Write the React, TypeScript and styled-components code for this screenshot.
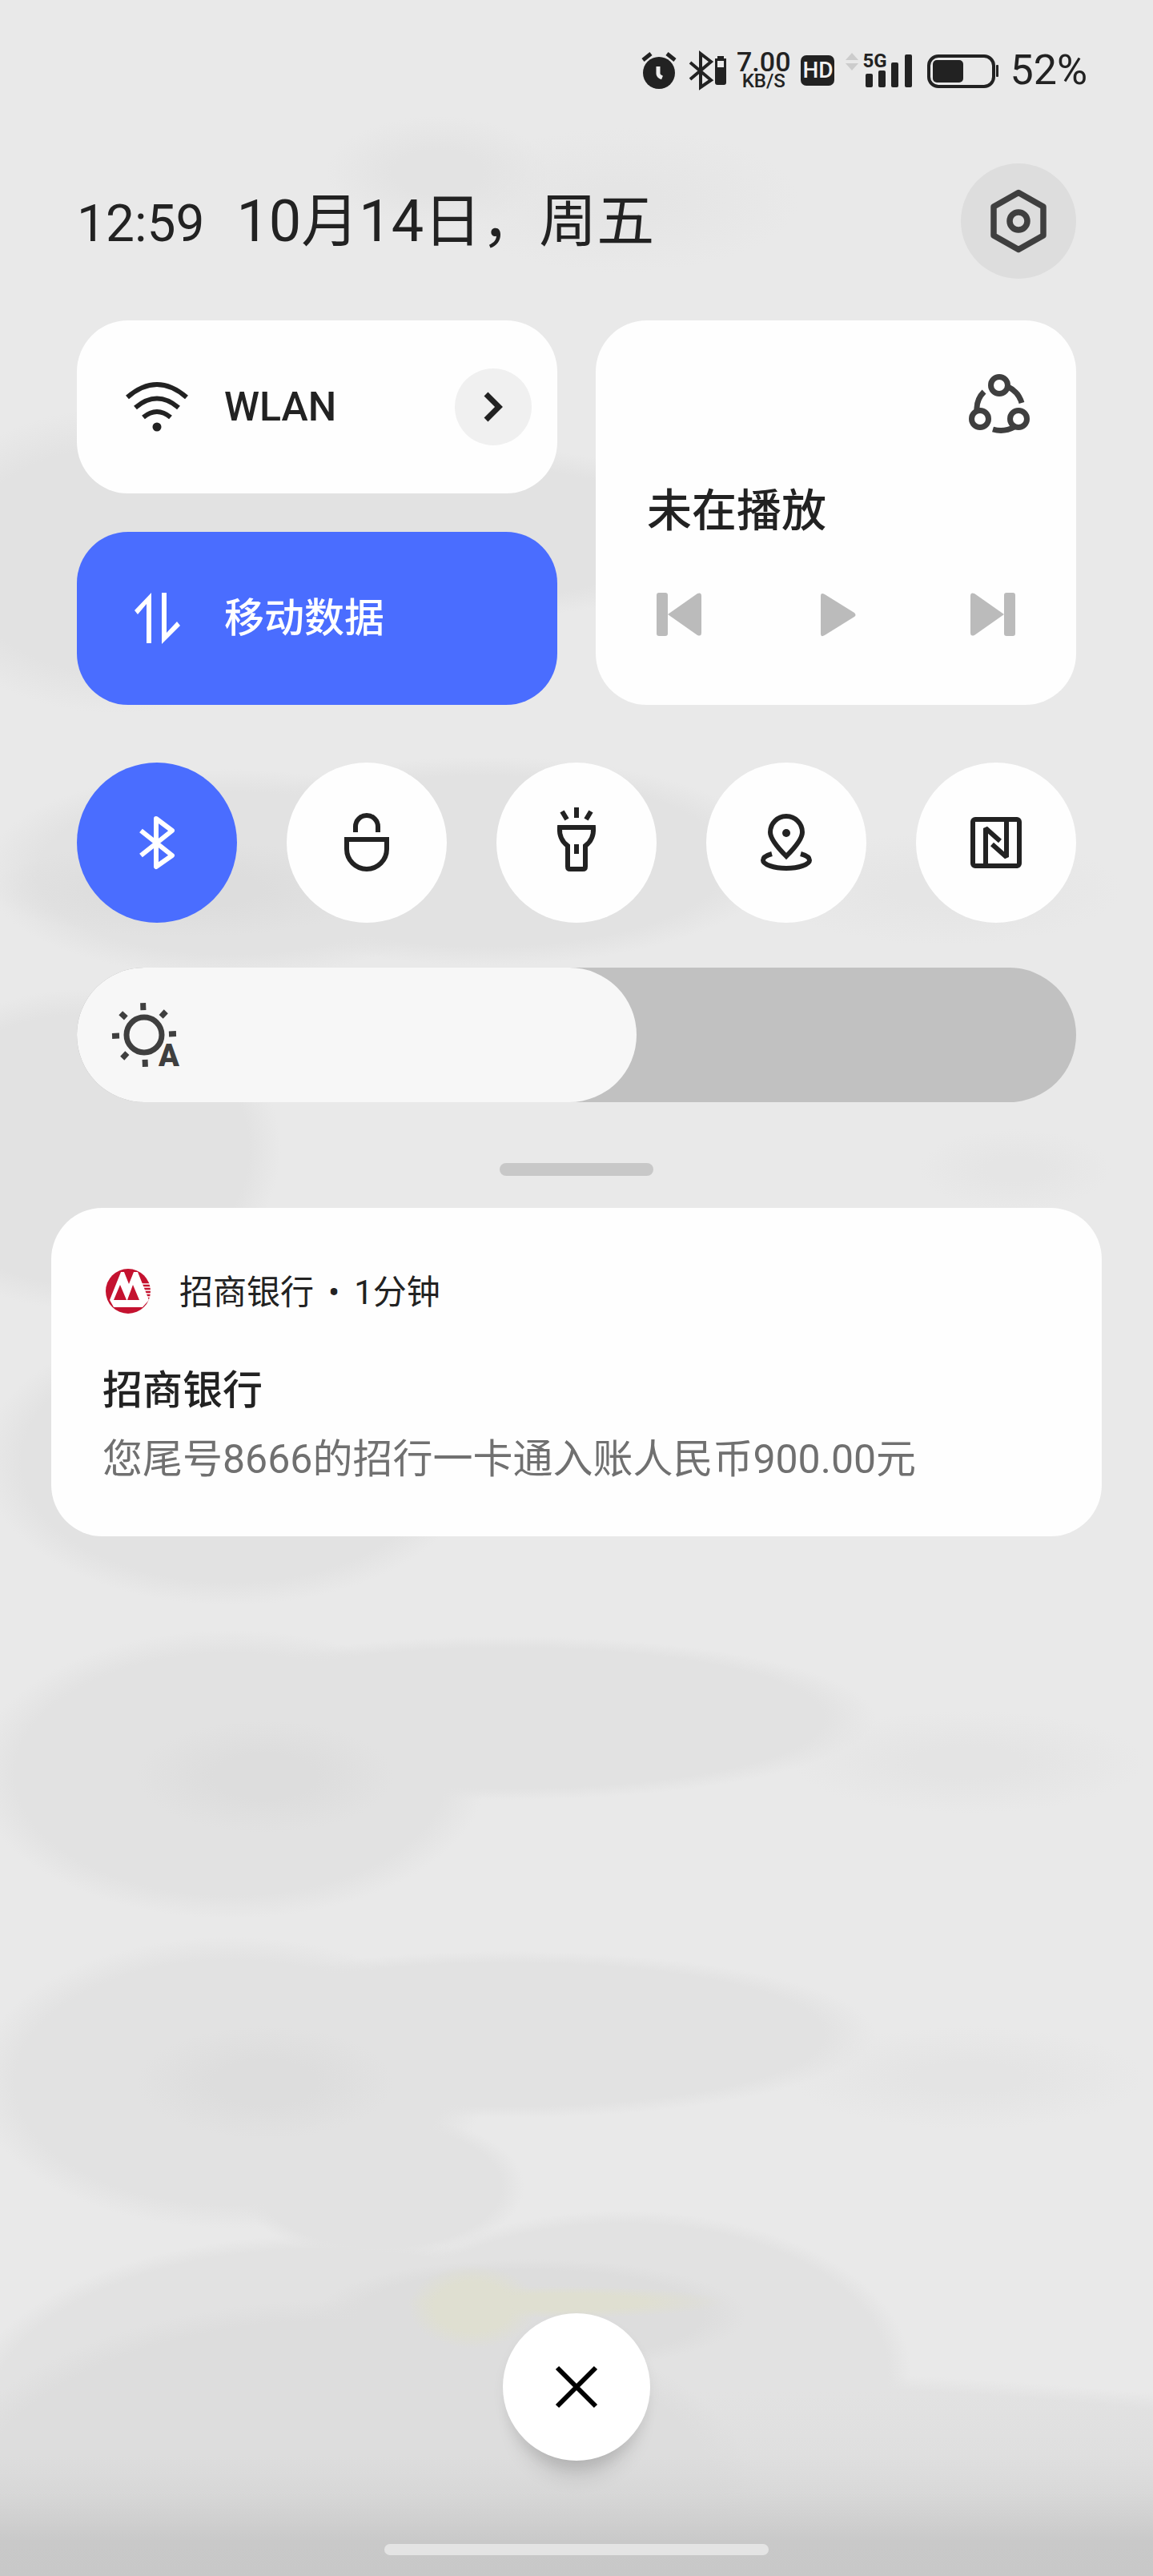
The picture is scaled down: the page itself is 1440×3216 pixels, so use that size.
import React, { useState } from "react";
import styled, { createGlobalStyle } from "styled-components";

const ink = "#222222";
const soft = "#3f3f3f";
const blue = "#4a6dff";

/* Wallpaper blobs: [x %, y px, x radius, y radius, colour, solid part %] */
type Blob = [number, number, number, number, string, number];

const blobs: Blob[] = [
  [16, 1110, 240, 60, "#dddddd", 40],
  [23, 2218, 160, 70, "#dddddd", 40],
  [23, 2600, 160, 70, "#dddddd", 40],
  [38, 215, 140, 70, "#e3e3e3", 40],
  [54, 250, 220, 90, "#e5e5e5", 20],
  [10, 700, 260, 190, "#e2e2e2", 74],
  [38, 665, 380, 110, "#e2e2e2", 78],
  [20, 1090, 310, 130, "#e2e2e2", 78],
  [42, 1075, 370, 130, "#e2e2e2", 82],
  [82, 1110, 220, 70, "#e5e5e5", 30],
  [7, 1435, 250, 200, "#e2e2e2", 84],
  [88, 1460, 120, 50, "#e5e5e5", 30],
  [20, 1824, 310, 180, "#e2e2e2", 84],
  [20, 2215, 320, 180, "#e2e2e2", 84],
  [44, 2145, 460, 102, "#e2e2e2", 86],
  [84, 2200, 220, 64, "#e4e4e4", 30],
  [20, 2600, 320, 182, "#e2e2e2", 84],
  [44, 2540, 460, 104, "#e2e2e2", 86],
  [84, 2594, 220, 64, "#e4e4e4", 30],
];

const floorBlobs: Blob[] = [
  [41, 2880, 80, 52, "#dfdfd1", 60],
  [49, 2874, 200, 20, "#dfdfd1", 50],
  [46, 2890, 270, 70, "#dddddd", 80],
  [30, 3130, 520, 260, "#dddddd", 90],
  [54, 2960, 360, 200, "#e2e2e2", 92],
  [33, 2730, 180, 90, "#e2e2e2", 84],
  [28, 3010, 450, 220, "#e2e2e2", 92],
  [60, 3190, 1200, 230, "#e2e2e2", 92],
];

const paint = ([x, y, rx, ry, color, solid]: Blob) =>
  `radial-gradient(${rx}px ${ry}px at ${x}% ${y}px, ${color} ${solid}%, transparent 100%)`;

const wallpaper = [
  "linear-gradient(to top, #c8c8c8 0, #c9c9c9 44px, rgba(207, 207, 207, 0.95) 70px, rgba(214, 214, 214, 0.8) 104px, rgba(221, 221, 221, 0.6) 150px, rgba(226, 226, 226, 0) 230px)",
  ...floorBlobs.map(paint),
  ...blobs.map(paint),
].join(",");

const GlobalStyle = createGlobalStyle`
  *, *::before, *::after { box-sizing: border-box; }
  body {
    margin: 0;
    background: #e9e9e9;
    color: ${ink};
    font-family: Roboto, "Noto Sans CJK SC", sans-serif;
  }
  button {
    border: 0;
    padding: 0;
    background: none;
    color: inherit;
    font: inherit;
    cursor: pointer;
  }
  svg { display: block; flex: none; overflow: visible; }
  h1, h2, p { margin: 0; font-weight: 400; }
`;

const Page = styled.div`
  min-height: 100vh;
  display: flex;
  flex-direction: column;
  background: ${wallpaper}, #e9e9e9;
`;

const StatusBar = styled.header`
  display: flex;
  justify-content: flex-end;
  align-items: center;
  gap: 13px;
  height: 48px;
  margin-top: 64px;
  padding-right: 82px;
`;

const Speed = styled.div`
  display: flex;
  flex-direction: column;
  align-items: center;
  font-weight: 500;
`;

const SpeedValue = styled.span`
  font-size: 34px;
  line-height: 26px;
`;

const SpeedUnit = styled.span`
  font-size: 24px;
  line-height: 22px;
`;

const HdBadge = styled.span`
  width: 42px;
  height: 38px;
  border-radius: 7px;
  background: ${ink};
  color: #f2f2f2;
  font-size: 28px;
  font-weight: 500;
  line-height: 38px;
  text-align: center;
`;

const Signal = styled.div`
  display: flex;
  width: 90px;
  height: 48px;
  position: relative;
`;

const SignalLabel = styled.span`
  position: absolute;
  left: 22px;
  top: 0;
  font-size: 24px;
  font-weight: 700;
  line-height: 24px;
`;

const Percent = styled.span`
  font-size: 52px;
  line-height: 52px;
`;

const Content = styled.main`
  display: flex;
  flex-direction: column;
  padding: 92px 96px 0;
`;

const Heading = styled.div`
  display: flex;
  justify-content: space-between;
  align-items: center;
`;

const Clock = styled.div`
  display: flex;
  align-items: baseline;
  gap: 40px;
  padding-top: 4px;
  line-height: 80px;
`;

const Time = styled.time`
  font-size: 64px;
`;

const DateText = styled.h1`
  font-size: 72px;
`;

const RoundButton = styled.button<{ $size: number; $bg: string; $fg?: string }>`
  display: flex;
  flex: none;
  justify-content: center;
  align-items: center;
  width: ${(p) => p.$size}px;
  height: ${(p) => p.$size}px;
  border-radius: 50%;
  background: ${(p) => p.$bg};
  color: ${(p) => p.$fg ?? ink};
`;

const Tiles = styled.section`
  display: grid;
  grid-template-columns: 1fr 1fr;
  gap: 48px;
  margin-top: 52px;
`;

const TileColumn = styled.div`
  display: flex;
  flex-direction: column;
  gap: 48px;
`;

const Tile = styled.div<{ $on?: boolean }>`
  display: flex;
  align-items: center;
  height: 216px;
  padding-right: 32px;
  border-radius: 64px;
  background: ${(p) => (p.$on ? blue : "#fefefe")};
  color: ${(p) => (p.$on ? "#ffffff" : ink)};
`;

const TileToggle = styled.button`
  display: flex;
  flex: 1;
  align-items: center;
  gap: 44px;
  height: 100%;
  padding-left: 60px;
  font-size: 50px;
  font-weight: 500;
  line-height: 64px;
`;

const MediaCard = styled.section`
  display: flex;
  flex-direction: column;
  padding: 66px 56px 85px 64px;
  border-radius: 64px;
  background: #fefefe;
`;

const CastButton = styled.button`
  align-self: flex-end;
  color: ${soft};
`;

const MediaTitle = styled.h2`
  margin-top: 64px;
  font-size: 56px;
  font-weight: 500;
  line-height: 64px;
`;

const Controls = styled.div`
  display: flex;
  justify-content: space-between;
  margin: 69px 20px 0 12px;
  color: #bbbbbb;
`;

const Toggles = styled.section`
  display: flex;
  justify-content: space-between;
  margin-top: 72px;
`;

const SliderTrack = styled.label`
  position: relative;
  display: block;
  height: 168px;
  margin-top: 56px;
  overflow: hidden;
  border-radius: 84px;
  background: #c1c1c1;
`;

const SliderFill = styled.span`
  display: flex;
  align-items: center;
  height: 100%;
  padding-left: 44px;
  border-radius: 84px;
  background: #f7f7f7;
  color: ${soft};
`;

const SunIcon = styled.span`
  position: relative;
  display: block;
`;

const AutoMark = styled.span`
  position: absolute;
  right: 0;
  bottom: 0;
  font-size: 38px;
  font-weight: 900;
  line-height: 32px;
`;

const SliderInput = styled.input`
  position: absolute;
  inset: 0;
  width: 100%;
  height: 100%;
  margin: 0;
  opacity: 0;
  cursor: pointer;
`;

const Grip = styled.div`
  align-self: center;
  width: 192px;
  height: 16px;
  margin-top: 76px;
  border-radius: 8px;
  background: #c8c8c8;
`;

const Notification = styled.article`
  margin: 40px 64px 0;
  padding: 72px 64px 64px;
  border-radius: 64px;
  background: #fefefe;
`;

const Source = styled.div`
  display: flex;
  align-items: center;
  gap: 32px;
  height: 64px;
`;

const SourceText = styled.div`
  display: flex;
  gap: 18px;
  padding-top: 4px;
  font-size: 42px;
  line-height: 64px;
`;

const NoteTitle = styled.h2`
  margin-top: 60px;
  font-size: 50px;
  font-weight: 500;
  line-height: 64px;
`;

const NoteBody = styled.p`
  margin-top: 22px;
  color: #707070;
  font-size: 50px;
  line-height: 64px;
`;

const Footer = styled.footer`
  display: flex;
  flex-direction: column;
  align-items: center;
  gap: 104px;
  margin-top: auto;
  padding: 64px 0 26px;
`;

const CloseButton = styled(RoundButton)`
  box-shadow: 0 36px 28px -20px rgba(0, 0, 0, 0.16), 0 8px 16px rgba(0, 0, 0, 0.05);
`;

const HomeBar = styled.div`
  width: 480px;
  height: 14px;
  border-radius: 7px;
  background: #e4e4e4;
`;

const line = (width: number) => ({
  fill: "none",
  stroke: "currentColor",
  strokeWidth: width,
});

const AlarmIcon = () => (
  <svg width="46" height="48" viewBox="0 0 46 48">
    <circle cx="21" cy="27" r="20" fill={ink} />
    <path d="M1 11 L11 3 M41 11 L31 3" {...line(5)} />
    <path d="M20 19 V28 Q20 31 25 33" fill="none" stroke="#eee" strokeWidth="5" />
  </svg>
);

const StatusBluetoothIcon = () => (
  <svg width="46" height="48" viewBox="0 0 46 48">
    <path d="M1 14 L27 36 L14 45 V3 L27 13 L1 35" {...line(4)} />
    <path d="M35 6 h8 v3 h3 v30 q0 3 -3 3 h-8 q-3 0 -3 -3 v-30 h3 z" fill={ink} />
    <rect x="35" y="12" width="8" height="8" fill="#e9e9e9" />
  </svg>
);

const SignalIcon = () => (
  <svg width="90" height="48" viewBox="0 0 90 48">
    <path d="M1 11 L9 2 L17 11 Z M1 15 L9 24 L17 15 Z" fill="#cccccc" />
    <rect x="26" y="28" width="9" height="17" rx="2" fill={ink} />
    <rect x="42" y="24" width="9" height="21" rx="2" fill={ink} />
    <rect x="58" y="14" width="9" height="31" rx="2" fill={ink} />
    <rect x="75" y="4" width="9" height="41" rx="2" fill={ink} />
  </svg>
);

const BatteryIcon = () => (
  <svg width="90" height="48" viewBox="0 0 90 48">
    <rect x="2" y="6" width="81" height="38" rx="12" {...line(4)} />
    <rect x="7" y="11" width="38" height="28" rx="5" fill={ink} />
    <rect x="86" y="17" width="3" height="15" rx="1" fill={ink} />
  </svg>
);

const SettingsIcon = () => (
  <svg width="80" height="80" viewBox="0 0 80 80" strokeLinejoin="round">
    <path d="M40 4.500 L71 22 V58 L40 75.500 L9 58 V22 Z" {...line(7.500)} />
    <circle cx="40" cy="40" r="11" {...line(7.500)} />
  </svg>
);

const WifiIcon = () => (
  <svg width="80" height="64" viewBox="0 0 80 64">
    <path d="M3 20 Q40 -12 77 20" {...line(6)} />
    <path d="M13 33 Q40 10 67 33" {...line(6)} />
    <path d="M23 45 Q40 31 57 45" {...line(6)} />
    <circle cx="40" cy="57" r="5.500" fill="currentColor" />
  </svg>
);

const DataIcon = () => (
  <svg width="80" height="64" viewBox="0 0 80 64" fill="currentColor">
    <path d="M33 0 V63 H27 V14 L16 27 L12 22 Z" />
    <path d="M46 0 H52 V50 L65 36 L69 41 L46 64 Z" />
  </svg>
);

const ChevronIcon = () => (
  <svg width="40" height="40" viewBox="0 0 40 40">
    <path d="M11 4 L27 20 L11 36" {...line(7)} />
  </svg>
);

const CastIcon = () => (
  <svg width="80" height="76" viewBox="0 0 80 76">
    <circle cx="40" cy="15" r="10.500" {...line(7)} />
    <circle cx="16" cy="57" r="10.500" {...line(7)} />
    <circle cx="64" cy="57" r="10.500" {...line(7)} />
    <path d="M51 17 Q64 23 68 37 M21 23 Q11 33 12 47 M32 70 Q46 74 59 67" {...line(7)} />
  </svg>
);

const PreviousIcon = () => (
  <svg width="56" height="56" viewBox="0 0 56 56" fill="currentColor">
    <rect x="0" y="1" width="14" height="54" rx="3" />
    <path d="M14 28 L51 2 Q56 0 56 5 V51 Q56 56 51 54 Z" />
  </svg>
);

const PlayIcon = () => (
  <svg width="56" height="56" viewBox="0 0 56 56" fill="currentColor">
    <path d="M9 5 Q9 0 14 3 L51 26 Q54 29 51 31 L14 54 Q9 57 9 52 Z" />
  </svg>
);

const NextIcon = () => (
  <svg width="56" height="56" viewBox="0 0 56 56" fill="currentColor">
    <rect x="42" y="1" width="14" height="54" rx="3" />
    <path d="M42 28 L5 2 Q0 0 0 5 V51 Q0 56 5 54 Z" />
  </svg>
);

const BluetoothIcon = () => (
  <svg width="80" height="80" viewBox="0 0 80 80" strokeLinejoin="round">
    <path d="M20 25 L59 56 L39 70 V10 L59 25 L20 56" {...line(6)} />
  </svg>
);

const LockIcon = () => (
  <svg width="80" height="80" viewBox="0 0 80 80">
    <path d="M26 27 V20 A14 14 0 0 1 54 20 V27" {...line(6)} />
    <path d="M15 36 H65 V48 A25 25 0 0 1 15 48 Z" {...line(6)} />
  </svg>
);

const TorchIcon = () => (
  <svg width="80" height="80" viewBox="0 0 80 80">
    <path d="M19 21 H61 Q62 36 51 44 V70 Q51 73 48 73 H32 Q29 73 29 70 V44 Q18 36 19 21 Z" {...line(6)} />
    <path d="M40 -4 V9 M22 1 L28 11 M58 1 L52 11 M40 42 V54" {...line(6)} />
  </svg>
);

const LocationIcon = () => (
  <svg width="80" height="80" viewBox="0 0 80 80">
    <path d="M40 57 Q20 37 20 27 A20 20 0 0 1 60 27 Q60 37 40 57 Z" {...line(6)} />
    <circle cx="40" cy="28" r="5" fill="currentColor" />
    <path d="M22 54 Q11 57 11 62 C11 67 24 72 40 72 S69 67 69 62 Q69 57 58 54" {...line(6)} />
  </svg>
);

const NfcIcon = () => (
  <svg width="80" height="80" viewBox="0 0 80 80">
    <rect x="11" y="11" width="58" height="58" rx="3" {...line(6)} />
    <path d="M27 68 V22 L45 38 M53 12 V58 L35 42" {...line(6)} strokeLinejoin="bevel" />
  </svg>
);

const BrightnessIcon = () => (
  <svg width="84" height="84" viewBox="0 0 84 84">
    <circle cx="40" cy="42" r="22" {...line(7)} />
    <g transform="rotate(-2 40 42)" {...line(7)}>
      {[0, 45, 90, 180, 225, 270, 315].map((a) => (
        <path key={a} d="M40 2 V11" transform={`rotate(${a} 40 42)`} />
      ))}
    </g>
  </svg>
);

const BankLogo = () => (
  <svg width="64" height="64" viewBox="-4 -4 64 64">
    <circle cx="28" cy="28" r="28" fill="#c4122f" />
    <path d="M5 39 L19 4 H23 L29 19 L35 4 H40 L54 39 L46 48 H10 Z" fill="#fff" />
    <path d="M10 39 L18 20 L26 39 Z M27 39 L34 20 L42 39 Z" fill="#c4122f" />
    <path d="M45 19 H55 M46 23 H56 M48 27 H56 M49 31 H56 M51 35 H55" stroke="#fff" strokeWidth="1.500" />
  </svg>
);

const CloseIcon = () => (
  <svg width="64" height="64" viewBox="0 0 64 64">
    <path d="M8 8 L56 56 M56 8 L8 56" {...line(6)} />
  </svg>
);

const toggles = [
  { name: "蓝牙", Icon: BluetoothIcon, on: true },
  { name: "方向锁定", Icon: LockIcon, on: false },
  { name: "手电筒", Icon: TorchIcon, on: false },
  { name: "位置信息", Icon: LocationIcon, on: false },
  { name: "NFC", Icon: NfcIcon, on: false },
];

export default function App() {
  const [level, setLevel] = useState(56);

  return (
    <Page lang="zh-CN">
      <GlobalStyle />
      <StatusBar>
        <AlarmIcon />
        <StatusBluetoothIcon />
        <Speed>
          <SpeedValue>7.00</SpeedValue>
          <SpeedUnit>KB/S</SpeedUnit>
        </Speed>
        <HdBadge>HD</HdBadge>
        <Signal>
          <SignalIcon />
          <SignalLabel>5G</SignalLabel>
        </Signal>
        <BatteryIcon />
        <Percent>52%</Percent>
      </StatusBar>

      <Content>
        <Heading>
          <Clock>
            <Time>12:59</Time>
            <DateText>10月14日，周五</DateText>
          </Clock>
          <RoundButton $size={144} $bg="#dddddd" $fg={soft} aria-label="设置">
            <SettingsIcon />
          </RoundButton>
        </Heading>

        <Tiles>
          <TileColumn>
            <Tile>
              <TileToggle aria-pressed={false}>
                <WifiIcon />
                WLAN
              </TileToggle>
              <RoundButton $size={96} $bg="#f0f0f0" aria-label="WLAN 详情">
                <ChevronIcon />
              </RoundButton>
            </Tile>
            <Tile $on>
              <TileToggle aria-pressed>
                <DataIcon />
                移动数据
              </TileToggle>
            </Tile>
          </TileColumn>
          <MediaCard>
            <CastButton aria-label="投放">
              <CastIcon />
            </CastButton>
            <MediaTitle>未在播放</MediaTitle>
            <Controls>
              <button aria-label="上一首">
                <PreviousIcon />
              </button>
              <button aria-label="播放">
                <PlayIcon />
              </button>
              <button aria-label="下一首">
                <NextIcon />
              </button>
            </Controls>
          </MediaCard>
        </Tiles>

        <Toggles>
          {toggles.map(({ name, Icon, on }) => (
            <RoundButton
              key={name}
              $size={200}
              $bg={on ? blue : "#fefefe"}
              $fg={on ? "#ffffff" : ink}
              aria-label={name}
              aria-pressed={on}
            >
              <Icon />
            </RoundButton>
          ))}
        </Toggles>

        <SliderTrack>
          <SliderFill style={{ width: `${level}%` }}>
            <SunIcon>
              <BrightnessIcon />
              <AutoMark>A</AutoMark>
            </SunIcon>
          </SliderFill>
          <SliderInput
            type="range"
            min={14}
            max={100}
            value={level}
            aria-label="亮度"
            onChange={(e) => setLevel(Number(e.target.value))}
          />
        </SliderTrack>

        <Grip />
      </Content>

      <Notification>
        <Source>
          <BankLogo />
          <SourceText>
            <span>招商银行</span>
            <span>•</span>
            <span>1分钟</span>
          </SourceText>
        </Source>
        <NoteTitle>招商银行</NoteTitle>
        <NoteBody>您尾号8666的招行一卡通入账人民币900.00元</NoteBody>
      </Notification>

      <Footer>
        <CloseButton $size={184} $bg="#ffffff" $fg="#000000" aria-label="清除全部通知">
          <CloseIcon />
        </CloseButton>
        <HomeBar />
      </Footer>
    </Page>
  );
}
